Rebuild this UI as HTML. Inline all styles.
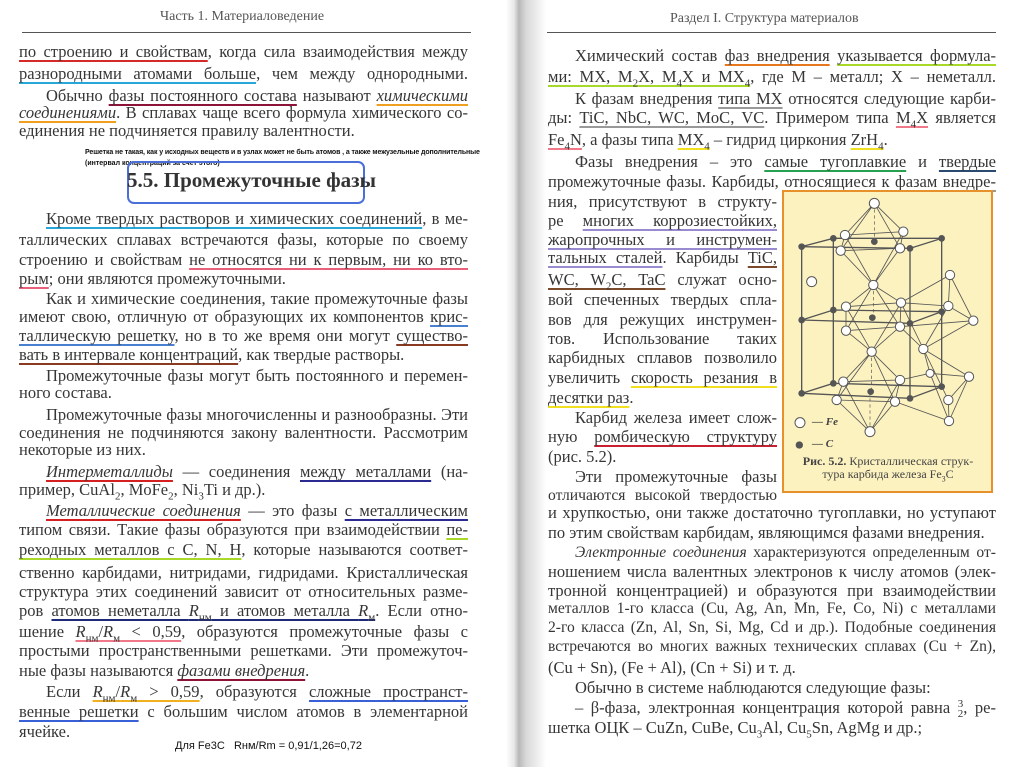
<!DOCTYPE html>
<html><head><meta charset="utf-8"><style>
html,body{margin:0;padding:0;}
body{width:1024px;height:767px;position:relative;overflow:hidden;background:#fff;font-family:"Liberation Serif",serif;color:#363636;}
.l{position:absolute;white-space:nowrap;text-align:justify;text-align-last:justify;font-size:16.5px;line-height:20px;height:20px;}
.e{text-align-last:left;}
.L{left:19px;width:449px;}
.R{left:548px;width:448px;}
.N{left:548px;width:229px;}
.s{font-size:15.6px;}
.i{padding-left:27px;box-sizing:border-box;}
.u{text-decoration:underline;text-decoration-thickness:2px;text-underline-offset:3px;text-decoration-skip-ink:none;}
sub{font-size:11px;line-height:0;}
.it{font-style:italic;}
.hd{position:absolute;font-size:14px;color:#555;white-space:nowrap;}
.rule{position:absolute;height:1px;background:#555;}
.note{position:absolute;font-family:"Liberation Sans",sans-serif;color:#111;white-space:nowrap;}
</style></head><body>
<div style="position:absolute;left:506px;top:0;width:40px;height:767px;background:linear-gradient(to right,#fff 0,#e8e8e8 20%,#b8b8b8 32%,#d8d8d8 50%,#fff 100%);"></div>

<div class="hd" style="left:160px;top:9px;">Часть 1. Материаловедение</div>
<div class="rule" style="left:22px;top:32px;width:449px;"></div>
<div class="hd" style="left:670px;top:11px;">Раздел I. Структура материалов</div>
<div class="rule" style="left:547px;top:32px;width:449px;"></div>

<!-- LEFT PAGE -->
<div class="l L" style="top:42px"><span class="u" style="text-decoration-color:#d42a2a">по строению и свойствам</span>, когда сила взаимодействия между</div>
<div class="l L" style="top:64px"><span class="u" style="text-decoration-color:#28a8d8">разнородными атомами больше</span>, чем между однородными.</div>
<div class="l L i" style="top:86px">Обычно <span class="u" style="text-decoration-color:#8c1238">фазы постоянного состава</span> называют <span class="u it" style="text-decoration-color:#f0a020">химическими</span></div>
<div class="l L" style="top:103px"><span class="u it" style="text-decoration-color:#f0a020">соединениями</span>. В сплавах чаще всего формула химического со-</div>
<div class="l L e" style="top:121px">единения не подчиняется правилу валентности.</div>

<div class="note" style="left:85px;top:149px;font-size:7px;font-weight:bold;letter-spacing:-0.1px;">Решетка не такая, как у исходных веществ и в узлах может не быть атомов , а также межузельные дополнительные</div>
<div class="note" style="left:85px;top:160px;font-size:7px;font-weight:bold;">(интервал концентраций за счет этого)</div>
<div style="position:absolute;left:127px;top:161px;width:234px;height:39px;border:2px solid #4a6fd8;border-radius:7px;"></div>
<div style="position:absolute;left:127px;top:168px;width:238px;text-align:center;font-size:21px;font-weight:bold;color:#333;white-space:nowrap;">5.5. Промежуточные фазы</div>

<div class="l L i" style="top:209px"><span class="u" style="text-decoration-color:#28a8d8">Кроме твердых растворов и химических соединений</span>, в ме-</div>
<div class="l L" style="top:230px">таллических сплавах встречаются фазы, которые по своему</div>
<div class="l L" style="top:250px">строению и свойствам <span class="u" style="text-decoration-color:#e8607a">не относятся ни к первым, ни ко вто-</span></div>
<div class="l L e" style="top:269px"><span class="u" style="text-decoration-color:#e8607a">рым</span>; они являются промежуточными.</div>
<div class="l L i" style="top:289px">Как и химические соединения, такие промежуточные фазы</div>
<div class="l L" style="top:307px">имеют свою, отличную от образующих их компонентов <span class="u" style="text-decoration-color:#4a80d0">крис-</span></div>
<div class="l L" style="top:326px"><span class="u" style="text-decoration-color:#4a80d0">таллическую решетку</span>, но в то же время они могут <span class="u" style="text-decoration-color:#8a3a20">существо-</span></div>
<div class="l L e" style="top:345px"><span class="u" style="text-decoration-color:#8a3a20">вать в интервале концентраций</span>, как твердые растворы.</div>
<div class="l L i" style="top:366px">Промежуточные фазы могут быть постоянного и перемен-</div>
<div class="l L e" style="top:383px">ного состава.</div>
<div class="l L i" style="top:405px">Промежуточные фазы многочисленны и разнообразны. Эти</div>
<div class="l L" style="top:423px">соединения не подчиняются закону валентности. Рассмотрим</div>
<div class="l L e" style="top:440px">некоторые из них.</div>
<div class="l L i" style="top:462px"><span class="u it" style="text-decoration-color:#d42020">Интерметаллиды</span> — соединения <span class="u" style="text-decoration-color:#2a2a90">между металлами</span> (на-</div>
<div class="l L e" style="top:480px">пример, CuAl<sub>2</sub>, MoFe<sub>2</sub>, Ni<sub>3</sub>Ti и др.).</div>
<div class="l L i" style="top:501px"><span class="u it" style="text-decoration-color:#d42020">Металлические соединения</span> — это фазы <span class="u" style="text-decoration-color:#2a2a90">с металлическим</span></div>
<div class="l L" style="top:520px">типом связи. Такие фазы образуются при взаимодействии <span class="u" style="text-decoration-color:#a8d828">пе-</span></div>
<div class="l L" style="top:540px"><span class="u" style="text-decoration-color:#a8d828">реходных металлов с C, N, H</span>, которые называются соответ-</div>
<div class="l L" style="top:563px">ственно карбидами, нитридами, гидридами. Кристаллическая</div>
<div class="l L" style="top:582px">структура этих соединений зависит от относительных разме-</div>
<div class="l L" style="top:601px">ров <span class="u" style="text-decoration-color:#1e2a78">атомов неметалла <i>R</i><sub>нм</sub> и атомов металла <i>R</i><sub>м</sub></span>. Если отно-</div>
<div class="l L" style="top:622px">шение <span class="u" style="text-decoration-color:#f07888"><i>R</i><sub>нм</sub>/<i>R</i><sub>м</sub> &lt; 0,59</span>, образуются промежуточные фазы с</div>
<div class="l L" style="top:641px">простыми пространственными решетками. Эти промежуточ-</div>
<div class="l L e" style="top:661px">ные фазы называются <span class="u it" style="text-decoration-color:#8c1238">фазами внедрения</span>.</div>
<div class="l L i" style="top:682px">Если <span class="u" style="text-decoration-color:#f0b020"><i>R</i><sub>нм</sub>/<i>R</i><sub>м</sub> &gt; 0,59</span>, образуются <span class="u" style="text-decoration-color:#3a60d8">сложные пространст-</span></div>
<div class="l L" style="top:702px"><span class="u" style="text-decoration-color:#3a60d8">венные решетки</span> с большим числом атомов в элементарной</div>
<div class="l L e" style="top:722px">ячейке.</div>
<div class="note" style="left:175px;top:740px;font-size:11px;">Для Fe3C &nbsp;&nbsp;Rнм/Rm = 0,91/1,26=0,72</div>

<!-- RIGHT PAGE -->
<div class="l R i" style="top:46px">Химический состав <span class="u" style="text-decoration-color:#e8781e">фаз внедрения</span> <span class="u" style="text-decoration-color:#a8d828">указывается формула-</span></div>
<div class="l R" style="top:67px"><span class="u" style="text-decoration-color:#a8d828">ми: MX, M<sub>2</sub>X, M<sub>4</sub>X и MX<sub>4</sub></span>, где M – металл; X – неметалл.</div>
<div class="l R i" style="top:89px">К фазам внедрения <span class="u" style="text-decoration-color:#999">типа MX</span> относятся следующие карби-</div>
<div class="l R" style="top:108px">ды: <span class="u" style="text-decoration-color:#999">TiC, NbC, WC, MoC, VC</span>. Примером типа <span class="u" style="text-decoration-color:#f07888">M<sub>4</sub>X</span> является</div>
<div class="l R e" style="top:130px"><span class="u" style="text-decoration-color:#f07888">Fe<sub>4</sub>N</span>, а фазы типа <span class="u" style="text-decoration-color:#f0e020">MX<sub>4</sub></span> – гидрид циркония <span class="u" style="text-decoration-color:#f0e020">ZrH<sub>4</sub></span>.</div>
<div class="l R i" style="top:152px">Фазы внедрения – это <span class="u" style="text-decoration-color:#28a050">самые тугоплавкие</span> и <span class="u" style="text-decoration-color:#2a4a70">твердые</span></div>
<div class="l R" style="top:172px">промежуточные фазы. Карбиды, <span class="u" style="text-decoration-color:#999">относящиеся к фазам внедре-</span></div>
<div class="l N" style="top:192px">ния, присутствуют в структу-</div>
<div class="l N" style="top:211px">ре <span class="u" style="text-decoration-color:#9a8ad0">многих коррозиестойких,</span></div>
<div class="l N" style="top:230px"><span class="u" style="text-decoration-color:#9a8ad0">жаропрочных и инструмен-</span></div>
<div class="l N" style="top:248px"><span class="u" style="text-decoration-color:#9a8ad0">тальных сталей</span>. Карбиды <span class="u" style="text-decoration-color:#7a4a2a">TiC,</span></div>
<div class="l N" style="top:270px"><span class="u" style="text-decoration-color:#7a4a2a">WC, W<sub>2</sub>C, TaC</span> служат осно-</div>
<div class="l N" style="top:290px">вой спеченных твердых спла-</div>
<div class="l N" style="top:310px">вов для режущих инструмен-</div>
<div class="l N" style="top:329px">тов. Использование таких</div>
<div class="l N" style="top:348px">карбидных сплавов позволило</div>
<div class="l N" style="top:368px">увеличить <span class="u" style="text-decoration-color:#f0e020">скорость резания в</span></div>
<div class="l N e" style="top:388px"><span class="u" style="text-decoration-color:#f0e020">десятки раз</span>.</div>
<div class="l N i" style="top:408px">Карбид железа имеет слож-</div>
<div class="l N" style="top:427px">ную <span class="u" style="text-decoration-color:#c82030">ромбическую структуру</span></div>
<div class="l N e" style="top:447px">(рис. 5.2).</div>
<div class="l N i" style="top:467px">Эти промежуточные фазы</div>
<div class="l N s" style="top:486px">отличаются высокой твердостью</div>
<div class="l R" style="top:503px">и хрупкостью, они также достаточно тугоплавки, но уступают</div>
<div class="l R e" style="top:523px">по этим свойствам карбидам, являющимся фазами внедрения.</div>
<div class="l R i s" style="top:543px"><i>Электронные соединения</i> характеризуются определенным от-</div>
<div class="l R" style="top:562px">ношением числа валентных электронов к числу атомов (элек-</div>
<div class="l R" style="top:581px">тронной концентрацией) и образуются при взаимодействии</div>
<div class="l R s" style="top:599px">металлов 1-го класса (Cu, Ag, An, Mn, Fe, Co, Ni) с металлами</div>
<div class="l R s" style="top:618px">2-го класса (Zn, Al, Sn, Si, Mg, Cd и др.). Подобные соединения</div>
<div class="l R s" style="top:637px">встречаются во многих важных технических сплавах (Cu + Zn),</div>
<div class="l R e" style="top:658px">(Cu + Sn), (Fe + Al), (Cn + Si) и т. д.</div>
<div class="l R e i" style="top:678px">Обычно в системе наблюдаются следующие фазы:</div>
<div class="l R i" style="top:698px">– β-фаза, электронная концентрация которой равна <span style="display:inline-block;font-size:11px;line-height:10px;text-align:center;vertical-align:middle;">3<br>2</span>, ре-</div>
<div class="l R e" style="top:718px">шетка ОЦК – CuZn, CuBe, Cu<sub>3</sub>Al, Cu<sub>5</sub>Sn, AgMg и др.;</div>

<!-- FIGURE -->
<div style="position:absolute;left:782px;top:190px;width:207px;height:299px;border:2px solid #e8902a;background:#fcf2c0;"></div>
<svg style="position:absolute;left:770px;top:180px" width="240" height="320" viewBox="0 0 720 960">
<g stroke="#555" stroke-width="4" fill="none">
<path d="M95 200V640M420 205V655M190 175V610M515 175V620"/>
<path d="M95 200L190 175L515 175L420 205ZM95 420L190 390L515 395L420 430ZM95 640L190 610L515 620L420 655Z"/>
</g>
<g stroke="#555" stroke-width="2.5" fill="none">
<path d="M313 70L225 165M313 70L400 155M313 70L212 212M313 70L390 205"/>
<path d="M225 165L400 155L390 205L212 212Z"/>
<path d="M310 315L225 165M310 315L400 155M310 315L212 212M310 315L390 205"/>
<path d="M310 315L228 380M310 315L393 368M310 315L228 452M310 315L390 440"/>
<path d="M228 380L393 368L390 440L228 452Z"/>
<path d="M305 515L228 380M305 515L393 368M305 515L228 452M305 515L390 440"/>
<path d="M305 515L220 605M305 515L390 600M305 515L200 660M305 515L375 665"/>
<path d="M220 605L390 600L375 665L200 660Z"/>
<path d="M300 755L220 605M300 755L390 600M300 755L200 660M300 755L375 665"/>
<path d="M393 368L540 285L610 422L535 378L393 368M540 285L535 378M390 440L610 422M460 507L535 378M460 507L610 422M460 507L393 368M460 507L390 440"/>
<path d="M460 507L480 580L597 590L535 660L537 723L375 665M460 507L597 590M460 507L535 660M480 580L537 723M597 590L537 723M390 600L480 580"/>
</g>
<g stroke="#555" stroke-width="2" stroke-dasharray="10 8" fill="none">
<path d="M313 70V185M310 315V413M305 515V635M300 755V635"/>
</g>
<g fill="#fff" stroke="#555" stroke-width="3">
<circle cx="313" cy="70" r="15"/><circle cx="225" cy="165" r="14"/><circle cx="400" cy="155" r="14"/><circle cx="212" cy="212" r="14"/><circle cx="390" cy="205" r="14"/><circle cx="310" cy="315" r="14"/><circle cx="228" cy="380" r="14"/><circle cx="393" cy="368" r="14"/><circle cx="228" cy="452" r="14"/><circle cx="390" cy="440" r="14"/><circle cx="305" cy="515" r="14"/><circle cx="220" cy="605" r="14"/><circle cx="390" cy="600" r="14"/><circle cx="200" cy="660" r="14"/><circle cx="375" cy="665" r="14"/><circle cx="300" cy="755" r="15"/><circle cx="125" cy="305" r="15"/><circle cx="540" cy="285" r="14"/><circle cx="535" cy="378" r="14"/><circle cx="610" cy="422" r="14"/><circle cx="460" cy="507" r="14"/><circle cx="480" cy="580" r="12"/><circle cx="597" cy="590" r="14"/><circle cx="535" cy="660" r="14"/><circle cx="537" cy="723" r="14"/>
<circle cx="90" cy="728" r="15"/>
</g>
<g fill="#555">
<circle cx="95" cy="200" r="10"/><circle cx="190" cy="175" r="10"/><circle cx="313" cy="185" r="10"/><circle cx="515" cy="175" r="10"/><circle cx="420" cy="205" r="10"/><circle cx="95" cy="420" r="10"/><circle cx="190" cy="390" r="10"/><circle cx="307" cy="413" r="10"/><circle cx="420" cy="430" r="10"/><circle cx="515" cy="395" r="10"/><circle cx="95" cy="640" r="10"/><circle cx="190" cy="610" r="10"/><circle cx="302" cy="635" r="10"/><circle cx="420" cy="655" r="10"/><circle cx="515" cy="620" r="10"/>
<circle cx="88" cy="795" r="11"/>
</g>
</svg>
<div style="position:absolute;left:812px;top:416px;font-size:11px;font-style:italic;font-weight:bold;color:#444;">— Fe</div>
<div style="position:absolute;left:812px;top:438px;font-size:11px;font-style:italic;font-weight:bold;color:#444;">— C</div>
<div style="position:absolute;left:793px;top:455px;width:190px;font-size:12px;line-height:13px;color:#444;text-align:center;white-space:nowrap;"><b>Рис. 5.2.</b> Кристаллическая струк-<br>тура карбида железа Fe<sub style="font-size:8px">3</sub>C</div>
</body></html>
